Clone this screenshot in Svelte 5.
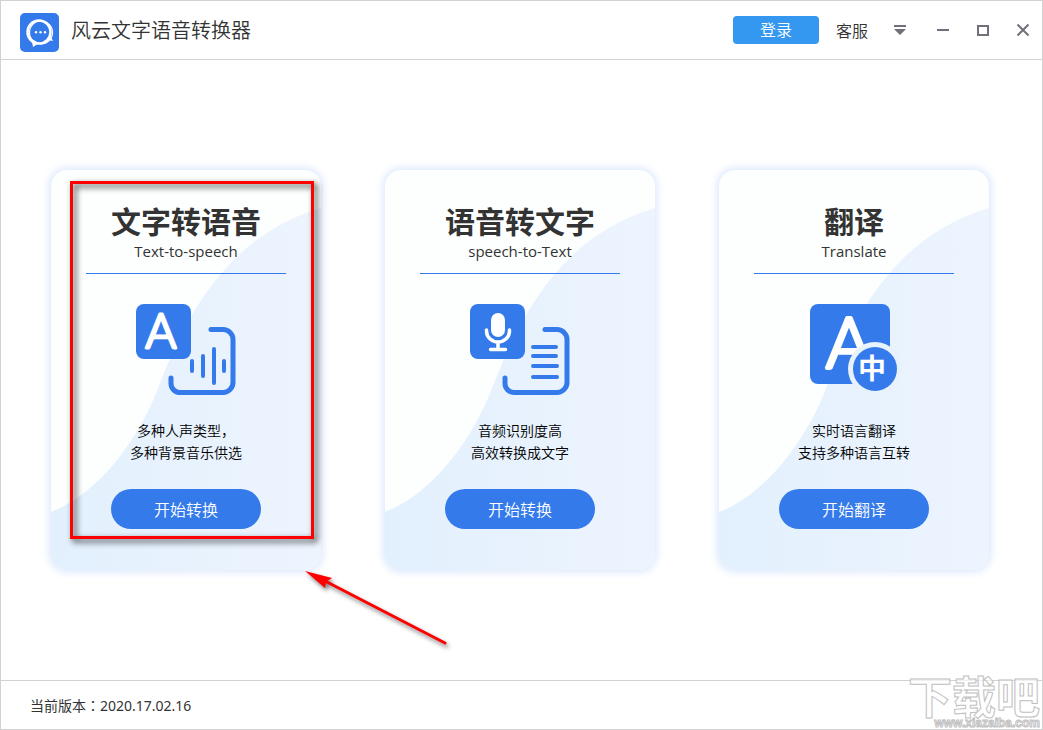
<script lang="ts">
	type Card = {
		id: 'tts' | 'stt' | 'translate';
		title: string;
		sub: string;
		lines: string[];
		action: string;
		marked?: boolean;
	};

	const cards: Card[] = [
		{
			id: 'tts',
			title: '文字转语音',
			sub: 'Text-to-speech',
			lines: ['多种人声类型，', '多种背景音乐供选'],
			action: '开始转换',
			marked: true
		},
		{
			id: 'stt',
			title: '语音转文字',
			sub: 'speech-to-Text',
			lines: ['音频识别度高', '高效转换成文字'],
			action: '开始转换'
		},
		{
			id: 'translate',
			title: '翻译',
			sub: 'Translate',
			lines: ['实时语言翻译', '支持多种语言互转'],
			action: '开始翻译'
		}
	];
</script>

<div class="window">
	<header class="titlebar">
		<svg class="logo" viewBox="0 0 39 39" aria-hidden="true">
			<rect width="39" height="39" rx="5" fill="#347aeb" />
			<circle cx="19" cy="19" r="11.500" fill="none" stroke="#fff" stroke-width="2.500" />
			<circle cx="21" cy="19.500" r="11.500" fill="none" stroke="#fff" stroke-width="1.200" />
			<path d="M11.500 26l1.500 8 6-4zM28 27l5 1-2-4z" fill="#fff" />
			<path d="M12 27c4 4 12 5 17 0" fill="none" stroke="#fff" stroke-width="1.500" />
			<circle cx="16" cy="19.300" r="1.200" fill="#fff" />
			<circle cx="20.500" cy="19.300" r="1.200" fill="#fff" />
			<circle cx="25" cy="19.300" r="1.200" fill="#fff" />
		</svg>
		<h1>风云文字语音转换器</h1>
		<button class="login">登录</button>
		<a class="service" href="#service">客服</a>
		<div class="controls">
			<button aria-label="菜单">
				<svg viewBox="0 0 14 14"><path d="M1 2h12v2H1zM1 6h12l-6 6z" fill="#726f7c" /></svg>
			</button>
			<button aria-label="最小化">
				<svg viewBox="0 0 14 14"><path d="M1 6h12v2H1z" fill="#726f7c" /></svg>
			</button>
			<button aria-label="最大化">
				<svg viewBox="0 0 14 14">
					<rect x="2" y="3" width="10" height="9" fill="none" stroke="#726f7c" stroke-width="2" />
				</svg>
			</button>
			<button aria-label="关闭">
				<svg viewBox="0 0 14 14">
					<path d="M1.500 1.500l11 11M12.500 1.500l-11 11" stroke="#726f7c" stroke-width="2" />
				</svg>
			</button>
		</div>
	</header>

	<main>
		{#each cards as card (card.id)}
			<section class="card">
				<svg class="wave" viewBox="0 0 270 400" preserveAspectRatio="none" aria-hidden="true">
					<defs>
						<linearGradient id="wave-{card.id}">
							<stop offset="0" stop-color="#e2f0fd" />
							<stop offset="1" stop-color="#edf4fe" />
						</linearGradient>
					</defs>
					<path
						d="M0 342C45 325 87 272 108 216C138 138 180 65 270 38V400H0z"
						fill="url(#wave-{card.id})"
					/>
				</svg>
				<h2>{card.title}</h2>
				<p class="sub">{card.sub}</p>

				<svg class="icon" viewBox="0 0 110 100" aria-hidden="true">
					{#if card.id === 'translate'}
						<rect x="11" y="4" width="80" height="80" rx="8" fill="#347aeb" />
						<text class="letter" x="50" y="68" font-size="70" stroke-width="4">A</text>
						<circle cx="76" cy="69" r="27" fill="#e8f2fd" />
						<circle cx="76" cy="69" r="22" fill="#347aeb" />
						<text class="zhong" x="73" y="79">中</text>
					{:else}
						<rect x="5" y="4" width="55" height="55" rx="8" fill="#347aeb" />
						<g fill="none" stroke="#347aeb" stroke-linecap="round">
							<path
								d="M80 29.500H92a10 10 0 0 1 10 10V82.500a10 10 0 0 1-10 10H49a9 9 0 0 1-9-9V78"
								stroke-width="5"
							/>
							{#if card.id === 'tts'}
								<path d="M61 61v10M72 56v20M83 49v34M93 61v10" stroke-width="4" />
							{:else}
								<path d="M68 47h23M68 56h23M68 66h24M68 77h24" stroke-width="4" />
							{/if}
						</g>
						{#if card.id === 'tts'}
							<text class="letter" x="30" y="48" font-size="47" stroke-width="3">A</text>
						{:else}
							<rect x="26" y="13" width="14" height="24" rx="7" fill="#fff" />
							<path
								d="M21.500 30v1a11.500 11 0 0 0 23 0v-1M33 42v7M25.500 49.500h15"
								fill="none"
								stroke="#fff"
								stroke-width="3.500"
								stroke-linecap="round"
							/>
						{/if}
					{/if}
				</svg>

				<p class="desc">
					{#each card.lines as line}
						<span>{line}</span>
					{/each}
				</p>
				<button class="start">{card.action}</button>

				{#if card.marked}
					<div class="mark"></div>
					<svg class="arrow" viewBox="0 0 150 80" aria-hidden="true">
						<path d="M22 11L140 72" stroke="#f00" stroke-width="3" stroke-linecap="round" />
						<path d="M0 0l27 7-6 4-1 6z" fill="#f00" />
					</svg>
				{/if}
			</section>
		{/each}
	</main>

	<footer>
		<p>当前版本<span class="colon">：</span>2020.17.02.16</p>
		<div class="watermark">
			<span class="brand">下载吧</span>
			<span class="site">www.xiazaiba.com</span>
		</div>
	</footer>
</div>

<style>
	:global(body) {
		margin: 0;
		background: #fff;
	}
	.window {
		box-sizing: border-box;
		min-height: 100vh;
		display: flex;
		flex-direction: column;
		position: relative;
		overflow: hidden;
		border: 1px solid #d2d2d2;
		color: #333;
		font-family: 'Noto Sans', 'Noto Sans CJK SC', sans-serif;
		font-size: 14px;
		font-weight: 400;
	}
	h1,
	h2,
	p {
		margin: 0;
	}
	button {
		border: 0;
		padding: 0;
		font: inherit;
		cursor: pointer;
	}

	.titlebar {
		display: flex;
		align-items: center;
		height: 58px;
		padding: 0 12px 0 19px;
		border-bottom: 1px solid #d2d2d2;
	}
	.logo {
		width: 39px;
		height: 39px;
		margin-top: 4px;
	}
	h1 {
		flex: 1;
		margin-left: 12px;
		font-family: 'Noto Sans CJK SC', sans-serif;
		font-size: 20px;
		font-weight: 350;
		line-height: 28px;
	}
	.login {
		width: 86px;
		height: 28px;
		border-radius: 4px;
		background: #3498f1;
		color: #fff;
		font-size: 16px;
		font-weight: 350;
		line-height: 28px;
	}
	.service {
		margin: 0 25px 0 17px;
		color: #333;
		font-size: 16px;
		font-weight: 350;
		text-decoration: none;
	}
	.controls {
		display: flex;
		gap: 26px;
	}
	.controls button {
		width: 14px;
		height: 14px;
		background: none;
	}
	.controls button:first-child {
		margin-right: 3px;
	}
	.controls svg {
		display: block;
		width: 14px;
		height: 14px;
	}

	main {
		flex: 1;
		display: flex;
		align-items: center;
		justify-content: space-between;
		padding: 20px 53px 20px 50px;
	}
	.card {
		position: relative;
		isolation: isolate;
		box-sizing: border-box;
		width: 270px;
		min-height: 400px;
		padding: 30px 35px 40px;
		display: flex;
		flex-direction: column;
		align-items: center;
		border-radius: 16px;
		background: #fdfffe;
		box-shadow: 0 0 8px 2px #dbe7fd;
	}
	.wave {
		position: absolute;
		inset: 0;
		z-index: -1;
		width: 100%;
		height: 100%;
		border-radius: 16px;
	}
	h2 {
		font-family: 'Noto Sans CJK SC', sans-serif;
		font-size: 30px;
		font-weight: 700;
		line-height: 40px;
	}
	.sub {
		align-self: stretch;
		padding-bottom: 11px;
		border-bottom: 1px solid #347aeb;
		font-family: 'Open Sans', sans-serif;
		font-size: 15px;
		line-height: 22px;
		text-align: center;
	}
	.icon {
		width: 110px;
		height: 100px;
		margin-top: 26px;
	}
	.letter {
		fill: #fff;
		stroke: #fff;
		stroke-linejoin: round;
		font-family: Lato, sans-serif;
		font-weight: 300;
		text-anchor: middle;
	}
	.zhong {
		fill: #fff;
		font-family: 'Noto Sans CJK SC', sans-serif;
		font-size: 28px;
		font-weight: 700;
		text-anchor: middle;
	}
	.desc {
		margin-top: 19px;
		color: #000;
		font-family: 'Noto Sans CJK SC', sans-serif;
		font-weight: 350;
		line-height: 22px;
		text-align: center;
	}
	.desc span {
		display: block;
	}
	.start {
		width: 150px;
		height: 40px;
		margin-top: 26px;
		border-radius: 20px;
		background: #347aeb;
		color: #fff;
		font-size: 16px;
		font-weight: 350;
	}

	/* callout drawn over the first card */
	.mark {
		position: absolute;
		top: 11px;
		left: 19px;
		width: 238px;
		height: 352px;
		border: 3px solid #f00;
		filter: drop-shadow(3px 3px 3px rgba(0, 0, 0, 0.8));
		pointer-events: none;
	}
	.arrow {
		position: absolute;
		top: 401px;
		left: 254px;
		width: 150px;
		height: 80px;
		overflow: visible;
		filter: drop-shadow(2px 3px 2px rgba(0, 0, 0, 0.5));
		pointer-events: none;
	}

	footer {
		display: flex;
		align-items: center;
		height: 48px;
		padding-left: 29px;
		border-top: 1px solid #d2d2d2;
	}
	.colon {
		font-family: 'Noto Sans CJK TC', sans-serif;
	}
	.watermark {
		position: absolute;
		right: 2px;
		bottom: 0;
		display: flex;
		flex-direction: column;
		align-items: flex-end;
		color: rgba(255, 255, 255, 0.7);
		font-weight: 700;
		-webkit-text-stroke: 1px #c0c0c0;
		pointer-events: none;
	}
	.brand {
		font-family: 'Noto Sans CJK SC', sans-serif;
		font-size: 44px;
		line-height: 44px;
	}
	.site {
		font-family: 'Liberation Sans', sans-serif;
		font-size: 12px;
		line-height: 12px;
	}
</style>
